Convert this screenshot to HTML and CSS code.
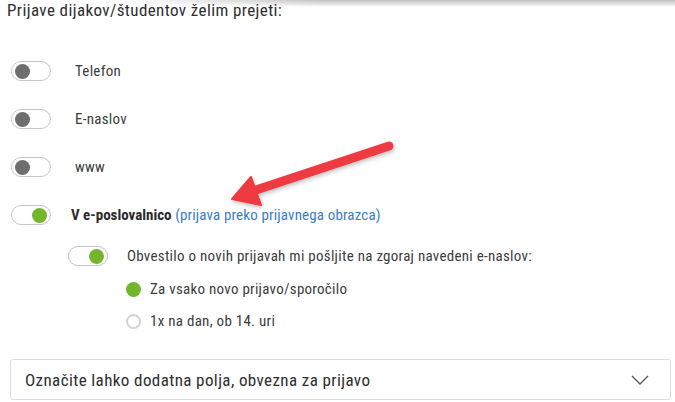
FILE: index.html
```html
<!DOCTYPE html>
<html lang="sl">
<head>
<meta charset="utf-8">
<link rel="stylesheet" href="styles.css">
</head>
<body>
<div class="shade"></div>
<div class="page">
  <h2 class="title">Prijave dijakov/študentov želim prejeti:</h2>
  <div class="options">
    <div class="row">
      <span class="toggle"><span class="knob"></span></span>
      <span class="label">Telefon</span>
    </div>
    <div class="row">
      <span class="toggle"><span class="knob"></span></span>
      <span class="label">E-naslov</span>
    </div>
    <div class="row">
      <span class="toggle"><span class="knob"></span></span>
      <span class="label">www</span>
    </div>
    <div class="row">
      <span class="toggle on"><span class="knob"></span></span>
      <span class="label label-on"><b>V e-poslovalnico</b> <a class="link">(prijava preko prijavnega obrazca)</a></span>
    </div>
  </div>
  <div class="sub">
    <div class="subrow">
      <span class="toggle on"><span class="knob"></span></span>
      <span class="sublabel">Obvestilo o novih prijavah mi pošljite na zgoraj navedeni e-naslov:</span>
    </div>
    <div class="radios">
      <div class="radio-row">
        <span class="radio checked"></span>
        <span class="sublabel">Za vsako novo prijavo/sporočilo</span>
      </div>
      <div class="radio-row">
        <span class="radio"></span>
        <span class="sublabel">1x na dan, ob 14. uri</span>
      </div>
    </div>
  </div>
  <div class="dropdown">
    <span class="dd-text">Označite lahko dodatna polja, obvezna za prijavo</span>
    <svg class="chev" width="18" height="10" viewBox="0 0 18 10"><path d="M1 1 L9 9 L17 1" fill="none" stroke="#555" stroke-width="1.3"/></svg>
  </div>
</div>
<svg class="arrow" width="675" height="402" viewBox="0 0 675 402">
  <defs>
    <filter id="sh" x="-20%" y="-20%" width="140%" height="140%">
      <feDropShadow dx="1" dy="2" stdDeviation="2" flood-color="#000" flood-opacity="0.25"/>
    </filter>
  </defs>
  <g filter="url(#sh)" fill="#ee3a42" stroke="#ee3a42">
    <line x1="389" y1="146" x2="256" y2="190" stroke-width="9" stroke-linecap="round"/>
    <polygon points="232,199 251,177 261,205" stroke-width="2" stroke-linejoin="round"/>
  </g>
</svg>
</body>
</html>
```
FILE: styles.css
```css
html, body {
  margin: 0;
  padding: 0;
  background: #fff;
}
body {
  width: 675px;
  height: 402px;
  overflow: hidden;
  position: relative;
  font-family: "Liberation Sans Narrow", "Roboto Condensed", "Roboto", sans-serif;
  color: #3a3a3a;
}
.shade {
  position: absolute;
  top: 0;
  left: 0;
  right: 0;
  height: 7px;
  background: linear-gradient(#c2c2c2, #d8d8d8 40%, rgba(255,255,255,0));
  -webkit-mask-image: linear-gradient(to right, transparent 120px, #000 320px);
  mask-image: linear-gradient(to right, transparent 120px, #000 320px);
}
.page {
  display: flex;
  flex-direction: column;
}
.title {
  margin: 0 0 0 7px;
  font-size: 17px;
  letter-spacing: 0.4px;
  line-height: 20px;
  font-weight: normal;
  color: #2e2e2e;
  position: relative;
}
.options {
  display: flex;
  flex-direction: column;
  margin-top: 27px;
  padding-left: 11px;
}
.row {
  height: 48px;
  display: flex;
  align-items: center;
}
.toggle {
  width: 40px;
  height: 20px;
  box-sizing: border-box;
  border: 1px solid #c6c6c6;
  border-radius: 10px;
  display: flex;
  align-items: center;
  padding: 0 3px;
  background: #fff;
  flex: none;
}
.knob {
  width: 15px;
  height: 15px;
  border-radius: 50%;
  background: #6e6e6e;
}
.toggle.on {
  justify-content: flex-end;
}
.toggle.on .knob {
  background: #74b62b;
}
.label {
  margin-left: 24px;
  font-size: 15px;
  letter-spacing: 0.27px;
  color: #3c3c3c;
}
.label-on {
  margin-left: 20px;
  letter-spacing: 0.15px;
}
.label-on b {
  color: #2a2a2a;
  letter-spacing: 0;
}
.link {
  color: #3a7cc6;
}
.sub {
  display: flex;
  flex-direction: column;
  padding-left: 68px;
}
.subrow {
  height: 34px;
  display: flex;
  align-items: center;
}
.sublabel {
  margin-left: 19px;
  font-size: 15px;
  letter-spacing: 0.27px;
  color: #3c3c3c;
}
.radios {
  display: flex;
  flex-direction: column;
  padding-left: 58px;
}
.radio-row {
  height: 32px;
  display: flex;
  align-items: center;
}
.radio-row .sublabel {
  margin-left: 9px;
}
.radio {
  width: 15px;
  height: 15px;
  box-sizing: border-box;
  border-radius: 50%;
  border: 2px solid #d2d2d2;
  flex: none;
}
.radio.checked {
  border: none;
  background: #74b62b;
}
.dropdown {
  margin: 22px 0 0 10px;
  width: 661px;
  height: 41px;
  box-sizing: border-box;
  border: 1px solid #dcdcdc;
  border-radius: 3px;
  display: flex;
  align-items: center;
  justify-content: space-between;
  padding: 0 21px 0 14px;
}
.dd-text {
  font-size: 17px;
  letter-spacing: 0.4px;
  color: #2e2e2e;
}
.chev {
  display: block;
}
.arrow {
  position: absolute;
  top: 0;
  left: 0;
  pointer-events: none;
}
```
